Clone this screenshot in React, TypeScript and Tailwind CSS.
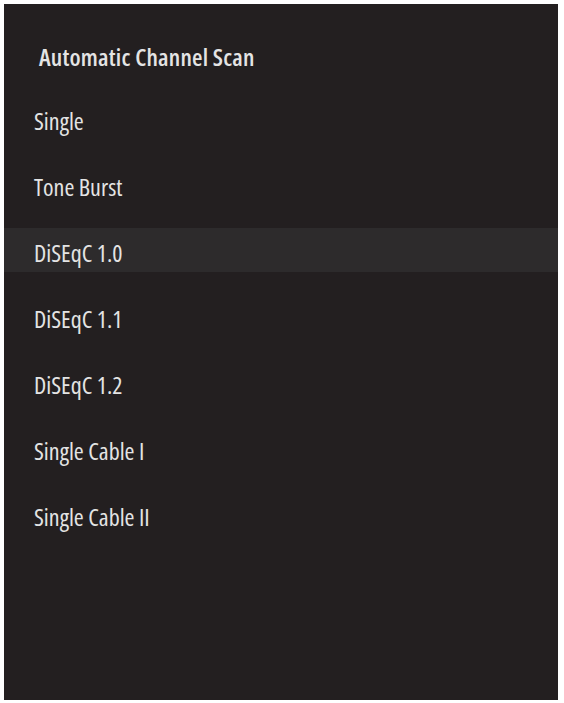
import React from "react";

const items = ["Single", "Tone Burst", "DiSEqC 1.0", "DiSEqC 1.1", "DiSEqC 1.2", "Single Cable I", "Single Cable II"];

export default function App() {
  return (
    <div className="w-[564px] h-[703px] bg-white pt-[4px] pl-[4px] pr-[6px] pb-[3px]">
      <div className="h-[696px] bg-[#231f20] pt-[37px] font-['Open_Sans',sans-serif] [font-stretch:condensed] text-[#e4e4e4]">
        <div className="pl-[35px] text-[24px] font-semibold leading-[32px] h-[32px] tracking-[0.2px]">Automatic Channel Scan</div>
        <div className="mt-[23px] flex flex-col gap-[22px]">
          {items.map((t) => (
            <div
              key={t}
              className={`h-[44px] pt-[5px] leading-[39px] pl-[30px] text-[24px] font-medium ${t === "DiSEqC 1.0" ? "bg-[#2d2b2c]" : ""}`}
            >
              {t}
            </div>
          ))}
        </div>
      </div>
    </div>
  );
}
